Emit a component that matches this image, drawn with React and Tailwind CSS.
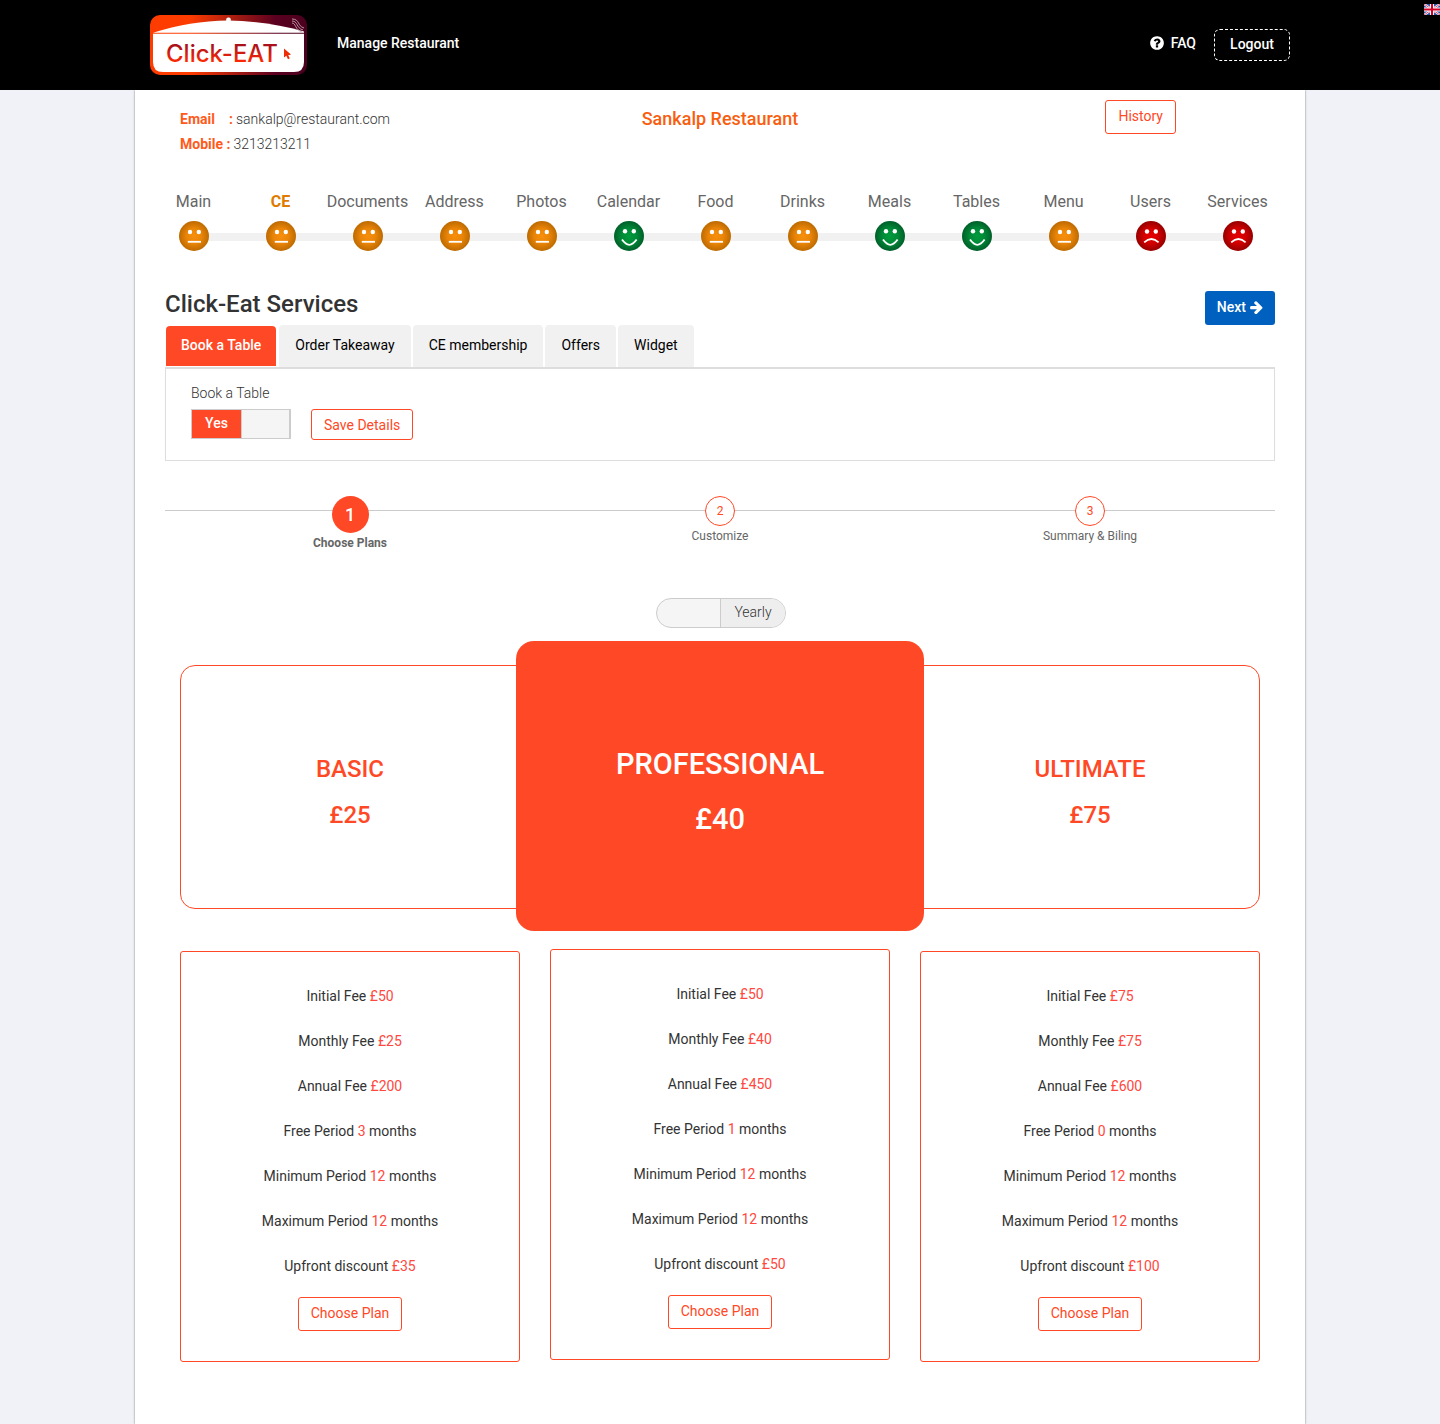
import React, { useState } from "react";

const STEPS = [
  { name: "Main", mood: "neutral" },
  { name: "CE", mood: "neutral", active: true },
  { name: "Documents", mood: "neutral" },
  { name: "Address", mood: "neutral" },
  { name: "Photos", mood: "neutral" },
  { name: "Calendar", mood: "happy" },
  { name: "Food", mood: "neutral" },
  { name: "Drinks", mood: "neutral" },
  { name: "Meals", mood: "happy" },
  { name: "Tables", mood: "happy" },
  { name: "Menu", mood: "neutral" },
  { name: "Users", mood: "sad" },
  { name: "Services", mood: "sad" },
];

const TABS = ["Book a Table", "Order Takeaway", "CE membership", "Offers", "Widget"];

const PLANS = [
  { name: "BASIC", price: "£25", initial: "£50", monthly: "£25", annual: "£200", free: "3", discount: "£35" },
  { name: "PROFESSIONAL", price: "£40", initial: "£50", monthly: "£40", annual: "£450", free: "1", discount: "£50", featured: true },
  { name: "ULTIMATE", price: "£75", initial: "£75", monthly: "£75", annual: "£600", free: "0", discount: "£100" },
];

function Logo() {
  return (
    <svg width="157" height="60" viewBox="0 0 157 60" role="img" aria-label="Click-EAT">
      <defs>
        <linearGradient id="logoFrame" x1="0" x2="1" y1="0" y2="0">
          <stop offset="0" stopColor="#ff3c00" />
          <stop offset="0.25" stopColor="#ff3c00" />
          <stop offset="0.8" stopColor="#5a0020" />
          <stop offset="1" stopColor="#4a001e" />
        </linearGradient>
        <linearGradient id="logoText" x1="0" x2="0" y1="0" y2="1">
          <stop offset="0.2" stopColor="#a8101a" />
          <stop offset="0.8" stopColor="#ff2a04" />
        </linearGradient>
      </defs>
      <rect width="157" height="60" rx="10" fill="url(#logoFrame)" />
      <path d="M3 17.800C28 9.800 52 6 78 5.500C104 6 130 9.500 154 16.500V17.800Z" fill="#fff" />
      <rect x="76.200" y="2.400" width="4.600" height="5" rx="2" fill="#fff" />
      <path d="M3 18.700H154V47Q154 57 144 57H13Q3 57 3 47Z" fill="#fff" />
      <g fill="none" stroke="#c9a5b2" strokeWidth="0.900">
        <path d="M142 4C150 4 147 11 154 13" />
        <path d="M142 6C148 6 146 13 153 15" />
        <path d="M142 8C146 8 145 15 152 17" />
      </g>
      <text x="16" y="47" fontFamily="Inter, sans-serif" fontSize="24" fontWeight="500" fill="url(#logoText)">
        Click-EAT
      </text>
      <path d="M134 33.500V42.500L136.300 40.800L138 44.200L139.800 43.300L138.200 40.200L141 39.600Z" fill="#ec2d08" />
    </svg>
  );
}

function Flag() {
  return (
    <svg width="16" height="11" viewBox="0 0 16 11" aria-hidden="true">
      <rect width="16" height="11" fill="#2f55a8" />
      <path d="M0 0L16 11M16 0L0 11" stroke="#fff" strokeWidth="2.200" />
      <path d="M0 0L16 11M16 0L0 11" stroke="#e0365a" strokeWidth="0.900" />
      <path d="M8 0V11M0 5.500H16" stroke="#fff" strokeWidth="4" />
      <path d="M8 0V11M0 5.500H16" stroke="#d80027" strokeWidth="2" />
    </svg>
  );
}

function QuestionIcon() {
  return (
    <svg width="16" height="16" viewBox="0 0 1792 1792" fill="currentColor" aria-hidden="true">
      <path d="M1024 1376v-192q0-14-9-23t-23-9h-192q-14 0-23 9t-9 23v192q0 14 9 23t23 9h192q14 0 23-9t9-23zm256-672q0-88-55.500-163t-138.500-116-170-41q-243 0-371 213-15 24 8 42l132 100q7 6 19 6 16 0 25-12 53-68 86-92 34-24 86-24 48 0 85.500 26t37.500 59q0 38-20 61t-68 45q-63 28-115.500 86.500t-52.500 125.500v36q0 14 9 23t23 9h192q14 0 23-9t9-23q0-19 21.500-49.500t54.500-49.500q32-18 49-28.500t46-35 44.500-48 28-60.500 12.500-81zm384 192q0 209-103 385.500t-279.500 279.500-385.500 103-385.500-103-279.500-279.500-103-385.500 103-385.500 279.500-279.500 385.500-103 385.500 103 279.500 279.500 103 385.500z" />
    </svg>
  );
}

function ArrowIcon() {
  return (
    <svg width="13" height="13" viewBox="170 160 1440 1550" fill="currentColor" aria-hidden="true">
      <path d="M1600 960q0 54-37 91l-651 651q-39 37-91 37-51 0-90-37l-75-75q-38-38-38-91t38-91l293-293h-704q-52 0-84.500-37.500t-32.500-90.500v-128q0-53 32.500-90.500t84.500-37.500h704l-293-294q-38-36-38-90t38-90l75-75q38-38 90-38 53 0 91 38l651 651q37 35 37 90z" />
    </svg>
  );
}

const MOODS = {
  neutral: { fill: "url(#faceOrange)", mouth: "M8.800 20.800H22", eyes: 11 },
  happy: { fill: "url(#faceGreen)", mouth: "M8 18.600Q15.300 29 22.600 18.600", eyes: 10.200 },
  sad: { fill: "url(#faceRed)", mouth: "M8.200 21.300Q15.400 14.700 22.600 21.300", eyes: 10.500 },
};

function Face({ mood }) {
  const m = MOODS[mood];
  return (
    <svg width="30" height="30" viewBox="0 0 30 30" className="ml-px" role="img" aria-label={mood}>
      <circle cx="15" cy="15" r="15" fill={m.fill} />
      <circle cx="11" cy={m.eyes} r="2.200" fill="#fff" />
      <circle cx="19.800" cy={m.eyes} r="2.200" fill="#fff" />
      <path d={m.mouth} fill="none" stroke="#fff" strokeWidth="1.800" />
    </svg>
  );
}

function FaceGradients() {
  return (
    <svg width="0" height="0" className="absolute" aria-hidden="true">
      <defs>
        <radialGradient id="faceOrange">
          <stop offset="0" stopColor="#f88f0c" />
          <stop offset="0.500" stopColor="#ea8508" />
          <stop offset="1" stopColor="#bd6a00" />
        </radialGradient>
        <radialGradient id="faceGreen">
          <stop offset="0" stopColor="#009b3c" />
          <stop offset="0.500" stopColor="#008a37" />
          <stop offset="1" stopColor="#005f2a" />
        </radialGradient>
        <radialGradient id="faceRed">
          <stop offset="0" stopColor="#e60000" />
          <stop offset="0.500" stopColor="#d20000" />
          <stop offset="1" stopColor="#960000" />
        </radialGradient>
      </defs>
    </svg>
  );
}

function Header() {
  return (
    <header className="relative bg-black text-white">
      <div className="mx-auto flex h-[90px] max-w-[1140px] items-center">
        <a href="#home"><Logo /></a>
        <a href="#manage" className="ml-[30px] pb-1 font-medium">Manage Restaurant</a>
        <a href="#faq" className="ml-auto flex items-center gap-[6px] pb-1 font-medium">
          <QuestionIcon />
          FAQ
        </a>
        <button type="button" className="ml-[18px] h-8 w-[76px] rounded-md border border-dashed border-white pb-[2px] text-center font-medium">
          Logout
        </button>
      </div>
      <a href="#language" aria-label="English" className="absolute top-1 right-0"><Flag /></a>
    </header>
  );
}

function Progress() {
  return (
    <nav aria-label="Sections" className="relative mt-8 pr-[9px] text-base text-[#666]">
      <div className="absolute top-[44px] right-[53px] left-[44px] h-2 bg-[#f1f1f1]" />
      <ol className="relative flex">
        {STEPS.map((s) => (
          <li key={s.name} className="flex flex-1 basis-0 flex-col items-center">
            <a href={"#" + s.name.toLowerCase()} className={s.active ? "flex flex-col items-center font-bold text-[#e07b00]" : "flex flex-col items-center"}>
              <span className="mb-[6px] leading-[26px]">{s.name}</span>
              <Face mood={s.mood} />
            </a>
          </li>
        ))}
      </ol>
    </nav>
  );
}

function Wizard() {
  return (
    <ol className="relative mt-[35px] grid h-[62px] grid-cols-3 text-center text-xs text-[#666]">
      <li aria-hidden="true" className="absolute top-[14px] right-0 left-0 h-px bg-[#ccc]" />
      <li className="relative flex flex-col items-center font-bold">
        <span className="flex size-[37px] items-center justify-center rounded-full bg-[#ff4825] text-lg font-medium text-white">1</span>
        <span className="mt-[2px]">Choose Plans</span>
      </li>
      {["Customize", "Summary & Biling"].map((t, i) => (
        <li key={t} className="relative flex flex-col items-center">
          <span className="flex size-[30px] items-center justify-center rounded-full border border-[#ff4825] bg-white text-[#ff4825]">{i + 2}</span>
          <span className="mt-[2px]">{t}</span>
        </li>
      ))}
    </ol>
  );
}

function PlanTile({ plan }) {
  if (plan.featured) {
    return (
      <div className="relative z-10 -mx-[34px] -mt-6 -mb-[22px] flex flex-col items-center justify-center gap-[19px] rounded-[18px] bg-[#ff4825] pt-[10px] text-[29px] leading-9 font-medium text-white">
        <h3>{plan.name}</h3>
        <p>{plan.price}</p>
      </div>
    );
  }
  return (
    <div className="flex flex-col items-center justify-center gap-4 border border-[#ff4825] pt-[88px] pb-[78px] text-2xl leading-[30px] font-medium text-[#ff4825] first:rounded-l-[15px] not-first:rounded-r-[15px]">
      <h3>{plan.name}</h3>
      <p>{plan.price}</p>
    </div>
  );
}

function Row({ label, value, suffix }) {
  return (
    <li className="leading-[45px]">
      {label} <span className="text-[#ff4840]">{value}</span>{suffix ? " " + suffix : ""}
    </li>
  );
}

function PlanDetails({ plan }) {
  return (
    <div className={plan.featured ? "-mt-[2px] mb-[2px] rounded-[3px] border border-[#ff4825] pt-[22px] pb-[30px] text-center" : "rounded-[3px] border border-[#ff4825] pt-[22px] pb-[30px] text-center"}>
      <ul className="text-[#333]">
        <Row label="Initial Fee" value={plan.initial} />
        <Row label="Monthly Fee" value={plan.monthly} />
        <Row label="Annual Fee" value={plan.annual} />
        <Row label="Free Period" value={plan.free} suffix="months" />
        <Row label="Minimum Period" value="12" suffix="months" />
        <Row label="Maximum Period" value="12" suffix="months" />
        <Row label="Upfront discount" value={plan.discount} />
      </ul>
      <button type="button" className="mt-2 h-[34px] rounded-[3px] border border-[#ff4825] px-3 pb-[2px] text-[#ff4825]">Choose Plan</button>
    </div>
  );
}

export default function App() {
  const [tab, setTab] = useState(0);
  const [booking, setBooking] = useState(true);
  const [monthly, setMonthly] = useState(false);

  return (
    <div className="flex min-h-screen flex-col bg-[#f1f2f7] font-['Roboto',sans-serif] text-sm text-[#333]">
      <FaceGradients />
      <Header />
      <main className="mx-auto w-full max-w-[1170px] flex-1 bg-white px-[15px] pt-[10px] pb-[61px] shadow-[0_0_2px_rgba(0,0,0,0.5)]">
        <div className="grid grid-cols-3 px-[30px]">
          <dl className="pt-[7px] leading-[25px] font-light">
            <div className="flex gap-[3px]">
              <dt className="flex w-[53px] justify-between font-bold text-[#ff5a1a]"><span>Email</span><span>:</span></dt>
              <dd>sankalp@restaurant.com</dd>
            </div>
            <div className="flex gap-[3px]">
              <dt className="font-bold text-[#ff5a1a]">Mobile :</dt>
              <dd>3213213211</dd>
            </div>
          </dl>
          <h1 className="pt-[6px] text-center text-lg leading-[25px] font-medium text-[#f95e0f]">Sankalp Restaurant</h1>
          <div className="pr-[84px] text-right">
            <button type="button" className="h-[34px] rounded-[3px] border border-[#ff4825] px-3 pb-[2px] text-[#ff4825]">History</button>
          </div>
        </div>

        <Progress />

        <section className="mt-10 px-[15px]">
          <div className="flex items-start justify-between">
            <h2 className="text-2xl leading-[26px] font-medium">Click-Eat Services</h2>
            <button type="button" className="flex h-[34px] items-center gap-1 rounded-[3px] bg-[#0060c0] px-3 pb-[2px] font-medium text-white">
              Next <ArrowIcon />
            </button>
          </div>

          <div role="tablist" className="flex gap-[2px] border-b-2 border-[#ddd]">
            {TABS.map((t, i) => (
              <button
                key={t}
                type="button"
                role="tab"
                aria-selected={tab === i}
                onClick={() => setTab(i)}
                className={
                  tab === i
                    ? "mx-px mt-px mb-px h-10 rounded-t-[4px] bg-[#ff4825] px-[15px] pb-[2px] font-medium text-white"
                    : "h-[42px] rounded-t-[4px] bg-[#f1f1f1] px-4 pb-[2px] text-black"
                }
              >
                {t}
              </button>
            ))}
          </div>
          <div className="border-x border-b border-[#ddd] px-[25px] pt-[14px] pb-5">
            <p className="font-light">Book a Table</p>
            <div className="mt-[6px] flex gap-5">
              <label className="relative flex h-[30px] w-[100px] border border-r-2 border-[#ccc] bg-[#f5f5f5]">
                <input type="checkbox" aria-label="Book a Table" checked={booking} onChange={(e) => setBooking(e.target.checked)} className="sr-only" />
                {booking ? (
                  <span className="w-[50px] border-r border-[#ccc] bg-[#ff4825] text-center leading-[27px] font-medium text-white">Yes</span>
                ) : (
                  <span className="ml-auto w-[50px] border-l border-[#ccc] bg-[#eee] text-center leading-[27px] font-light">No</span>
                )}
              </label>
              <button type="button" className="h-[31px] rounded-[3px] border border-[#ff4825] px-3 text-[#ff4825]">Save Details</button>
            </div>
          </div>

          <Wizard />

          <div className="mt-10 flex justify-center">
            <label className="relative ml-[2px] flex h-[30px] w-[130px] overflow-hidden rounded-full border border-[#ccc] bg-[#f5f5f5]">
              <input type="checkbox" aria-label="Monthly billing" checked={monthly} onChange={(e) => setMonthly(e.target.checked)} className="sr-only" />
              {monthly ? (
                <span className="w-[65px] border-r border-[#ccc] bg-[#ff4825] text-center leading-[27px] font-medium text-white">Monthly</span>
              ) : (
                <span className="ml-auto w-[65px] border-l border-[#ccc] bg-[#eee] text-center leading-[27px] font-light">Yearly</span>
              )}
            </label>
          </div>

          <div className="mt-[37px] grid grid-cols-3 gap-x-[30px] gap-y-[42px] px-[15px]">
            {PLANS.map((p) => (
              <PlanTile key={p.name} plan={p} />
            ))}
            {PLANS.map((p) => (
              <PlanDetails key={p.name + "-details"} plan={p} />
            ))}
          </div>
        </section>
      </main>
    </div>
  );
}
